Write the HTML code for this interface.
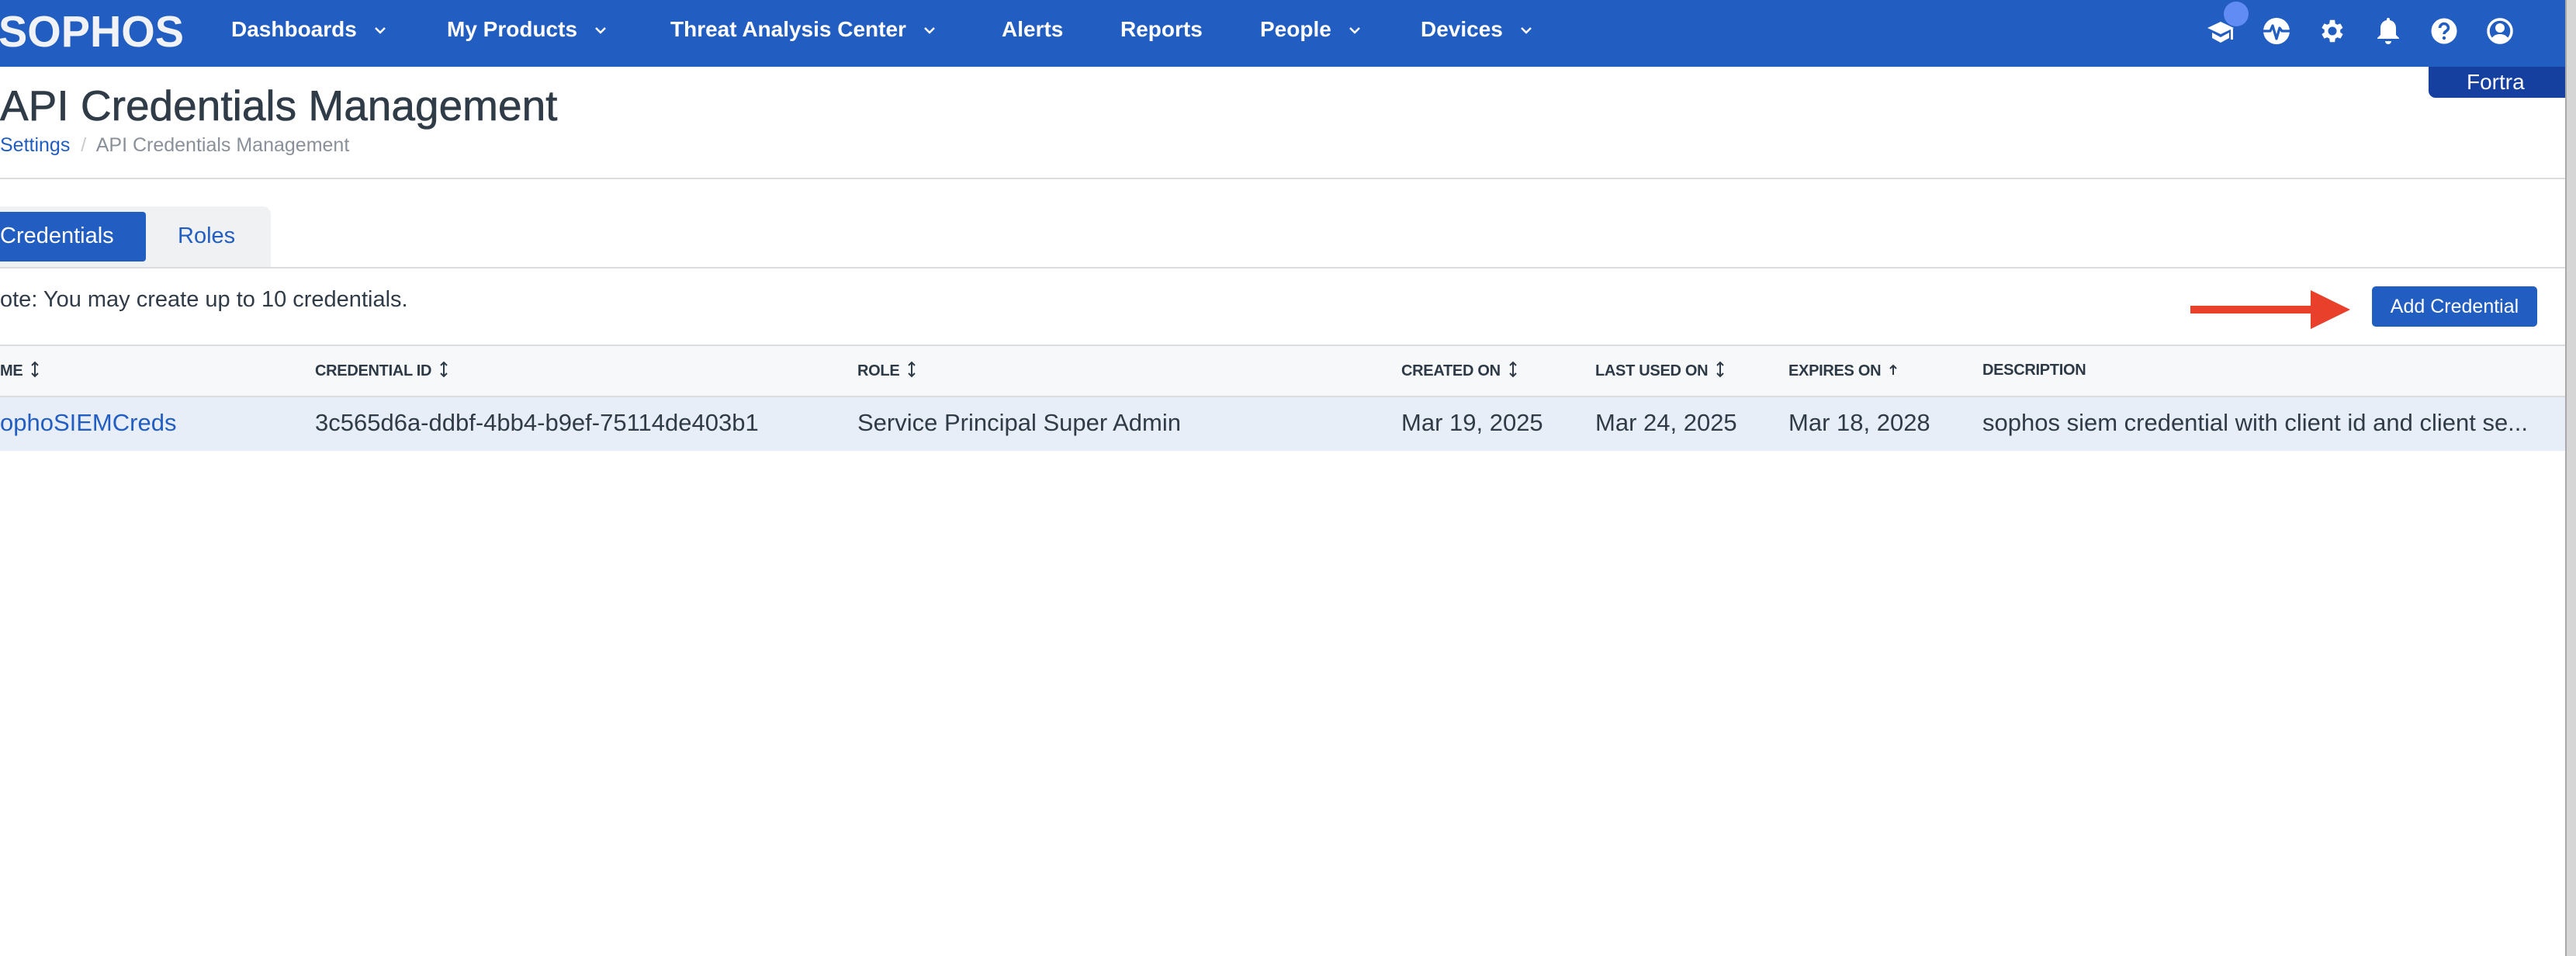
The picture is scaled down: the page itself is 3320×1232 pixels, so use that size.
<!DOCTYPE html>
<html><head><meta charset="utf-8"><style>
*{margin:0;padding:0;box-sizing:border-box}
body{width:3320px;height:1232px;overflow:hidden;background:#fff;font-family:"Liberation Sans",sans-serif;color:#2f3b47;position:relative}
.a{position:absolute;white-space:nowrap}
.nav{left:0;top:0;width:3306px;height:86px;background:#225dc1}
.ni{top:20px;font-size:28px;font-weight:bold;color:#fff;line-height:36px}
.chev{display:inline-block;margin-left:22px;vertical-align:3px}
.th{top:465px;font-size:20px;font-weight:bold;color:#2d3a46;letter-spacing:-0.3px;line-height:24px}
.td{top:527px;font-size:31px;color:#2f3b47;line-height:36px}
.so{display:inline-block;margin-left:10px;vertical-align:-3px}
</style></head><body>
<div class="a nav"></div>
<div class="a" style="left:-2px;top:13px;font-size:57px;font-weight:bold;color:#f0f2f5;line-height:56px;transform:scaleX(0.98);transform-origin:left">SOPHOS</div>

<div class="a ni" style="left:298px">Dashboards<svg class="chev" width="16" height="10" viewBox="0 0 16 10"><path d="M2 2l6 6 6-6" stroke="#fff" stroke-width="2.5" fill="none"/></svg></div>
<div class="a ni" style="left:576px">My Products<svg class="chev" width="16" height="10" viewBox="0 0 16 10"><path d="M2 2l6 6 6-6" stroke="#fff" stroke-width="2.5" fill="none"/></svg></div>
<div class="a ni" style="left:864px">Threat Analysis Center<svg class="chev" width="16" height="10" viewBox="0 0 16 10"><path d="M2 2l6 6 6-6" stroke="#fff" stroke-width="2.5" fill="none"/></svg></div>
<div class="a ni" style="left:1291px">Alerts</div>
<div class="a ni" style="left:1444px">Reports</div>
<div class="a ni" style="left:1624px">People<svg class="chev" width="16" height="10" viewBox="0 0 16 10"><path d="M2 2l6 6 6-6" stroke="#fff" stroke-width="2.5" fill="none"/></svg></div>
<div class="a ni" style="left:1831px">Devices<svg class="chev" width="16" height="10" viewBox="0 0 16 10"><path d="M2 2l6 6 6-6" stroke="#fff" stroke-width="2.5" fill="none"/></svg></div>

<svg class="a" style="left:2843px;top:22px" width="38" height="36" viewBox="0 0 38 36"><path d="M2 14L19 6l17 8-17 8z" fill="#fff"/><path d="M8 20v7l11 6 11-6v-7l-11 6z" fill="#fff"/><rect x="32" y="15" width="3" height="14" fill="#fff"/></svg>
<div class="a" style="left:2866px;top:2px;width:32px;height:32px;border-radius:50%;background:#608cf4"></div>
<svg class="a" style="left:2916px;top:22px" width="36" height="36" viewBox="0 0 36 36"><circle cx="18" cy="18" r="17" fill="#fff"/><path d="M1 18h9l3-7 5 17 4-14 3 4h10" stroke="#225dc1" stroke-width="3.2" fill="none" stroke-linejoin="round"/></svg>
<svg class="a" style="left:2987px;top:21px" width="38" height="38" viewBox="0 0 24 24"><path fill="#fff" d="M19.4 13a7.5 7.5 0 0 0 0-2l2.1-1.6-2-3.5-2.5 1a7 7 0 0 0-1.7-1L15 3h-4l-.4 2.9a7 7 0 0 0-1.7 1l-2.5-1-2 3.5L6.6 11a7.5 7.5 0 0 0 0 2l-2.2 1.6 2 3.5 2.5-1a7 7 0 0 0 1.7 1L11 21h4l.4-2.9a7 7 0 0 0 1.7-1l2.5 1 2-3.5zM13 15.5a3.5 3.5 0 1 1 0-7 3.5 3.5 0 0 1 0 7z" transform="translate(-1 0)"/></svg>
<svg class="a" style="left:3063px;top:22px" width="30" height="36" viewBox="0 0 30 36"><path d="M15 1a2 2 0 0 1 2 2v1c5 1 8 5 8 10v9l4 4v1H1v-1l4-4v-9c0-5 3-9 8-10V3a2 2 0 0 1 2-2z" fill="#fff"/><path d="M11 31h8a4 4 0 0 1-8 0z" fill="#fff"/></svg>
<svg class="a" style="left:3133px;top:23px" width="34" height="34" viewBox="0 0 34 34"><circle cx="17" cy="17" r="16.5" fill="#fff"/><path d="M11.5 13a5.5 5.5 0 0 1 11 0c0 4-5.5 4-5.5 8" stroke="#225dc1" stroke-width="3.6" fill="none"/><circle cx="17" cy="26" r="2.2" fill="#225dc1"/></svg>
<svg class="a" style="left:3205px;top:23px" width="34" height="34" viewBox="0 0 34 34"><circle cx="17" cy="17" r="15" fill="none" stroke="#fff" stroke-width="3.5"/><circle cx="17" cy="13" r="6" fill="#fff"/><path d="M6 27c3-5 7-6 11-6s8 1 11 6a15 15 0 0 1-22 0z" fill="#fff"/></svg>

<div class="a" style="left:3130px;top:86px;width:176px;height:40px;background:#1540a0;border-bottom-left-radius:9px;color:#fff;font-size:28px;line-height:40px;padding-left:49px">Fortra</div>

<div class="a" style="left:0;top:104px;font-size:55px;color:#2f3b47;line-height:64px;-webkit-text-stroke:0.6px #2f3b47">API Credentials Management</div>
<div class="a" style="left:0;top:171px;font-size:25px;line-height:32px;color:#8a9099"><span style="color:#225dc1">Settings</span>&nbsp; <span style="color:#c8cacd">/</span>&nbsp; API Credentials Management</div>
<div class="a" style="left:0;top:229px;width:3306px;height:2px;background:#dcdde0"></div>

<div class="a" style="left:0;top:266px;width:349px;height:79px;background:#f0f1f3;border-radius:0 10px 0 0"></div>
<div class="a" style="left:0;top:273px;width:188px;height:64px;background:#225dc1;border-radius:0 4px 4px 0;color:#fff;font-size:29px;line-height:62px">Credentials</div>
<div class="a" style="left:229px;top:273px;font-size:29px;line-height:62px;color:#225dc1">Roles</div>
<div class="a" style="left:0;top:344px;width:3306px;height:2px;background:#dcdde0"></div>

<div class="a" style="left:0;top:368px;font-size:29px;line-height:36px;color:#2f3b47">ote: You may create up to 10 credentials.</div>
<div class="a" style="left:2823px;top:394px;width:160px;height:10px;background:#e8402a"></div>
<svg class="a" style="left:2978px;top:374px" width="51" height="50" viewBox="0 0 51 50"><path d="M0 0L51 25 0 50z" fill="#e8402a"/></svg>
<div class="a" style="left:3057px;top:369px;width:213px;height:52px;background:#225dc1;border-radius:5px;color:#fff;font-size:25px;line-height:52px;text-align:center">Add Credential</div>

<div class="a" style="left:0;top:444px;width:3306px;height:68px;background:#f7f8fa;border-top:2px solid #dcdde0;border-bottom:2px solid #dcdde0"></div>
<div class="a" style="left:0;top:512px;width:3306px;height:69px;background:#e8eef8"></div>

<div class="a th" style="left:0">ME<svg class="so" width="12" height="22" viewBox="0 0 12 22"><path d="M6 2v18M2 6l4-4 4 4M2 16l4 4 4-4" stroke="#2d3a46" stroke-width="2" fill="none"/></svg></div>
<div class="a th" style="left:406px">CREDENTIAL ID<svg class="so" width="12" height="22" viewBox="0 0 12 22"><path d="M6 2v18M2 6l4-4 4 4M2 16l4 4 4-4" stroke="#2d3a46" stroke-width="2" fill="none"/></svg></div>
<div class="a th" style="left:1105px">ROLE<svg class="so" width="12" height="22" viewBox="0 0 12 22"><path d="M6 2v18M2 6l4-4 4 4M2 16l4 4 4-4" stroke="#2d3a46" stroke-width="2" fill="none"/></svg></div>
<div class="a th" style="left:1806px">CREATED ON<svg class="so" width="12" height="22" viewBox="0 0 12 22"><path d="M6 2v18M2 6l4-4 4 4M2 16l4 4 4-4" stroke="#2d3a46" stroke-width="2" fill="none"/></svg></div>
<div class="a th" style="left:2056px">LAST USED ON<svg class="so" width="12" height="22" viewBox="0 0 12 22"><path d="M6 2v18M2 6l4-4 4 4M2 16l4 4 4-4" stroke="#2d3a46" stroke-width="2" fill="none"/></svg></div>
<div class="a th" style="left:2305px">EXPIRES ON<svg class="so" width="12" height="22" viewBox="0 0 12 22"><path d="M6 18V6M2 10l4-4 4 4" stroke="#2d3a46" stroke-width="2" fill="none"/></svg></div>
<div class="a th" style="left:2555px">DESCRIPTION</div>

<div class="a td" style="left:0;color:#225dc1">ophoSIEMCreds</div>
<div class="a td" style="left:406px">3c565d6a-ddbf-4bb4-b9ef-75114de403b1</div>
<div class="a td" style="left:1105px">Service Principal Super Admin</div>
<div class="a td" style="left:1806px">Mar 19, 2025</div>
<div class="a td" style="left:2056px">Mar 24, 2025</div>
<div class="a td" style="left:2305px">Mar 18, 2028</div>
<div class="a td" style="left:2555px">sophos siem credential with client id and client se...</div>

<div class="a" style="left:3306px;top:0;width:14px;height:1232px;background:#d6d6d6;border-left:2px solid #a9a9a9"></div>
</body></html>
